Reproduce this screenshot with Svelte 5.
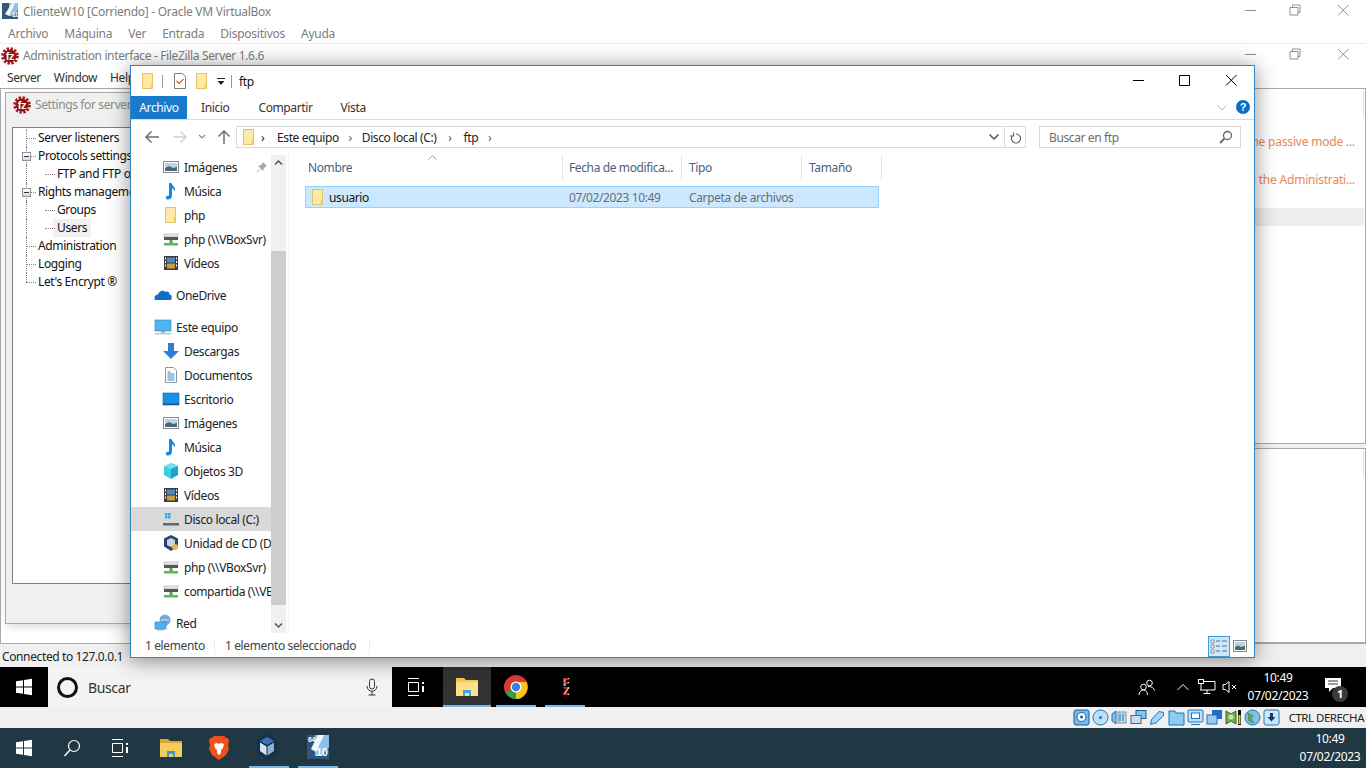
<script>
  // nav pane rows of the explorer window
  const navItems = [
    { label: 'Imágenes', icon: 'images', sub: true, pin: true },
    { label: 'Música', icon: 'music', sub: true },
    { label: 'php', icon: 'folder', sub: true },
    { label: 'php (\\\\VBoxSvr)', icon: 'netdrive', sub: true },
    { label: 'Vídeos', icon: 'video', sub: true },
    { label: 'OneDrive', icon: 'onedrive', gap: true },
    { label: 'Este equipo', icon: 'pc', gap: true },
    { label: 'Descargas', icon: 'download', sub: true },
    { label: 'Documentos', icon: 'doc', sub: true },
    { label: 'Escritorio', icon: 'desktop', sub: true },
    { label: 'Imágenes', icon: 'images', sub: true },
    { label: 'Música', icon: 'music', sub: true },
    { label: 'Objetos 3D', icon: 'cube', sub: true },
    { label: 'Vídeos', icon: 'video', sub: true },
    { label: 'Disco local (C:)', icon: 'disk', sub: true, active: true },
    { label: 'Unidad de CD (D:) VirtualBox', icon: 'cd', sub: true },
    { label: 'php (\\\\VBoxSvr)', icon: 'netdrive', sub: true },
    { label: 'compartida (\\\\VBoxSvr)', icon: 'netdrive', sub: true },
    { label: 'Red', icon: 'net', gap: true }
  ];

  const vmMenu = ['Archivo', 'Máquina', 'Ver', 'Entrada', 'Dispositivos', 'Ayuda'];
  const tree = [
    { label: 'Server listeners' },
    { label: 'Protocols settings', open: true },
    { label: 'FTP and FTP over TLS', child: true },
    { label: 'Rights management', open: true },
    { label: 'Groups', child: true },
    { label: 'Users', child: true, current: true },
    { label: 'Administration' },
    { label: 'Logging' },
    { label: "Let's Encrypt ®", last: true }
  ];
  const columns = [
    { label: 'Nombre', cls: 'c-name' },
    { label: 'Fecha de modifica...', cls: 'c-date' },
    { label: 'Tipo', cls: 'c-type' },
    { label: 'Tamaño', cls: 'c-size' }
  ];
</script>

{#snippet winButtons(cls, restore)}
  <div class="win-buttons {cls}">
    <svg width="46" height="20" viewBox="0 0 46 20"><path d="M17 10.500h11" stroke="currentColor" fill="none"/></svg>
    <svg width="46" height="20" viewBox="0 0 46 20">
      {#if restore}
        <path d="M18.500 7.500v-2.500h7.500v7.500h-2M16 7.500h8v7.500h-8z" stroke="currentColor" fill="none"/>
      {:else}
        <path d="M17.500 5.500h10v10h-10z" stroke="currentColor" fill="none"/>
      {/if}
    </svg>
    <svg width="46" height="20" viewBox="0 0 46 20"><path d="M18 5l10.500 10.500M28.500 5L18 15.500" stroke="currentColor" fill="none"/></svg>
  </div>
{/snippet}

{#snippet fzLogo()}
  <svg width="18" height="18" viewBox="0 0 18 18">
    <circle cx="9" cy="9" r="7" fill="none" stroke="#a81818" stroke-width="3.600" stroke-dasharray="2.200 1.500"/>
    <circle cx="9" cy="9" r="6.500" fill="#8f1414"/>
    <text x="9" y="13" text-anchor="middle" font-size="11" font-weight="700" fill="#fff" font-family="Liberation Sans, sans-serif">fz</text>
  </svg>
{/snippet}

{#snippet folderIcon()}
  <svg width="16" height="18" viewBox="0 0 16 18">
    <path d="M2.500 1.500h10v15h-10z" fill="#ffe9a6" stroke="#e3c26c"/>
    <path d="M10.500 11.500h2v5h-2z" fill="#f2cf6d"/>
  </svg>
{/snippet}

{#snippet navIcon(name)}
  <svg width="18" height="18" viewBox="0 0 18 18">
    {#if name === 'folder'}
      <path d="M3.500 1.500h10v15h-10z" fill="#ffe9a6" stroke="#e3c26c"/><path d="M11.500 11h2v5.500h-2z" fill="#f2cf6d"/>
    {:else if name === 'images'}
      <rect x="1.500" y="3.500" width="15" height="11" fill="#fff" stroke="#7f8c96"/><rect x="3" y="5" width="12" height="8" fill="#b9d3e6"/><path d="M3 10l4-2 4 2 4-1v4H3z" fill="#4d6a70"/>
    {:else if name === 'music'}
      <path d="M7 1h2.500c.5 3 4.500 4 3.500 8.500-1-2-2-3-3-3V14c0 2-2 3.500-4 3.500-2.500 0-3-2.500-1-3.500 1-.5 1.500-.5 2-.5z" fill="#1d86d8"/>
    {:else if name === 'netdrive'}
      <rect x="2" y="4" width="14" height="3" fill="#e4e6e6" stroke="#9aa0a0" stroke-width=".5"/><rect x="2" y="7" width="14" height="3" fill="#505858"/><rect x="7.500" y="10" width="3" height="3" fill="#4ca84c"/><rect x="2" y="13" width="14" height="2.500" fill="#58b858"/>
    {:else if name === 'video'}
      <rect x="2" y="2" width="14" height="14" fill="#3c3c3c"/><rect x="5" y="3.500" width="8" height="5" fill="#4c88c8"/><rect x="5" y="9.500" width="8" height="5" fill="#c8a040"/><path d="M3 3.500h1v2H3zM3 7h1v2H3zM3 10.500h1v2H3zM14 3.500h1v2h-1zM14 7h1v2h-1zM14 10.500h1v2h-1z" fill="#fff"/>
    {:else if name === 'onedrive'}
      <path d="M1 14c-1.500-3 .5-5.500 3-5.500C5 5 9 3.500 11.500 6c2-1 4 0 4 2.500 2 0 3 3 1.500 5.500z" fill="#0f6fc6"/>
    {:else if name === 'pc'}
      <rect x="1" y="2" width="16" height="11" fill="#4db4ee" stroke="#2d7fb8" stroke-width=".6"/><path d="M7 13h4v2H7z" fill="#9fb4c0"/><rect x="1" y="15" width="16" height="1.500" fill="#b8c8d2"/>
    {:else if name === 'download'}
      <path d="M6 1h6v8h5l-8 8-8-8h5z" fill="#2f7fd6"/>
    {:else if name === 'doc'}
      <path d="M3.500 1.500h8l3 3v12h-11z" fill="#fff" stroke="#8a949a"/><path d="M5.500 6h3M5.500 8h7M5.500 10h7M5.500 12h7M5.500 14h7" stroke="#3f87c8"/>
    {:else if name === 'desktop'}
      <rect x="1" y="3" width="16" height="12" fill="#1c8fe6" stroke="#0f69b0" stroke-width=".6"/><rect x="1" y="13.500" width="16" height="1.500" fill="#13599a"/>
    {:else if name === 'cube'}
      <path d="M9 1l7 3v9l-7 4z" fill="#1ba4c8"/><path d="M9 1L2 4l7 3 7-3z" fill="#6fe0ef"/><path d="M2 4l7 3v10l-7-4z" fill="#3ccbe0"/>
    {:else if name === 'disk'}
      <path d="M3 3h2.500v2.500H3zM6 3h2.500v2.500H6zM3 6h2.500v2.500H3zM6 6h2.500v2.500H6z" fill="#31a8e4"/><path d="M2 11h14l1 3v1.500H1V14z" fill="#d7dadb"/><rect x="1" y="13" width="16" height="2.500" fill="#62696b"/>
    {:else if name === 'cd'}
      <path d="M9 1l7 3.500v8L9 17l-7-4.500v-8z" fill="#27486e"/><path d="M9 4l4 2v5l-4 2-4-2V6z" fill="#c8d4df"/><circle cx="13" cy="13" r="3" fill="#e8b93e"/>
    {:else if name === 'net'}
      <circle cx="11" cy="6" r="5.500" fill="#74a9dc"/><path d="M7 7c2-2 5-1 8-1" stroke="#d4e8f7" fill="none"/><rect x="1" y="8" width="11" height="7" fill="#4db4ee" stroke="#2d7fb8" stroke-width=".6"/><rect x="3" y="15" width="7" height="1.500" fill="#9fb4c0"/>
    {/if}
  </svg>
{/snippet}

<div class="screen">
  <div class="vm-title">
    <svg class="vm-logo" width="20" height="18" viewBox="0 0 20 18">
      <rect x="2" y="1" width="16" height="16" fill="#37567c"/>
      <path d="M9 1h9v7l-5 6H9z" fill="#8fc0e8"/><path d="M12 1l-7 11 4 2 6-13z" fill="#f4f8fb"/>
      <text x="12" y="15" font-size="7" font-weight="700" fill="#fff" font-family="Liberation Sans, sans-serif">10</text>
    </svg>
    <span>ClienteW10 [Corriendo] - Oracle VM VirtualBox</span>
    {@render winButtons('faded', true)}
  </div>
  <div class="vm-menu">
    {#each vmMenu as item}<span>{item}</span>{/each}
  </div>

  <div class="fz">
    <div class="fz-title">
      {@render fzLogo()}
      <span>Administration interface - FileZilla Server 1.6.6</span>
      {@render winButtons('faded lifted', true)}
    </div>
    <div class="fz-menu"><span>Server</span><span>Window</span><span>Help</span></div>

    <div class="fz-body">
      <div class="fz-left">
        <div class="dialog">
          <div class="dialog-title">{@render fzLogo()}<span>Settings for server</span></div>
          <div class="tree">
            {#each tree as node}
              <div class="node" class:child={node.child} class:last={node.last}>
                {#if node.open}<i class="expander"></i>{/if}
                <span class:current={node.current}>{node.label}</span>
              </div>
            {/each}
          </div>
        </div>
      </div>
      <div class="fz-right">
        <div class="pane top-pane">
          <i class="thin-scroll"></i>
          <div class="log">You should configure the passive mode ...</div>
          <div class="log">Connections from outside on the Administrati...</div>
          <div class="log selected-log"></div>
        </div>
        <div class="pane bottom-pane"><i class="thin-scroll"></i></div>
      </div>
    </div>
    <div class="fz-status">Connected to 127.0.0.1</div>
  </div>

  <div class="guest-bar">
    <div class="start">
      <svg width="18" height="18" viewBox="0 0 18 18"><path d="M1 3.200l7-1v6.300H1zM9 2l8-1.200v7.700H9zM1 9.500h7v6.300l-7-1zM9 9.500h8v7.700L9 16z" fill="#fff"/></svg>
    </div>
    <div class="cortana">
      <i class="ring"></i>
      <span>Buscar</span>
      <svg class="mic" width="12" height="18" viewBox="0 0 12 18"><rect x="3.500" y="1" width="5" height="10" rx="2.500" fill="none" stroke="#333"/><path d="M1 8c0 7 10 7 10 0M6 13.500V17M2.500 17h7" fill="none" stroke="#333"/></svg>
    </div>
    <div class="task-view">
      <svg width="18" height="18" viewBox="0 0 18 18"><path d="M1 .5h11M1 17.500h11M1.500 4.500h10v9h-10z" fill="none" stroke="#fff"/><path d="M15 4h2v2h-2zM15 8h2v6h-2z" fill="#fff"/></svg>
    </div>
    <div class="guest-app active">
      <svg width="22" height="20" viewBox="0 0 22 20"><path d="M0 1h8l2 2h12v16H0z" fill="#f3c94f"/><path d="M0 5h22v14H0z" fill="#ffe08a"/><path d="M7 19v-6h8v6h-2v-3H9v3z" fill="#3ea6dc"/></svg>
    </div>
    <div class="guest-app chrome">
      <svg width="24" height="24" viewBox="0 0 24 24">
        <circle cx="12" cy="12" r="12" fill="#d93b30"/>
        <path d="M12 12L1.500 17.500A12 12 0 0 0 12 24c3 0 5-1 6-2z" fill="#2f9e47"/>
        <path d="M12 7h10.500A12 12 0 0 1 12 24z" fill="#f6c525"/>
        <circle cx="12" cy="12" r="5.500" fill="#fff"/><circle cx="12" cy="12" r="4.200" fill="#3d7fe0"/>
      </svg>
    </div>
    <div class="guest-app fzapp"><span>F<br/>Z</span></div>
    <div class="tray">
      <svg class="people" width="18" height="18" viewBox="0 0 18 18"><circle cx="11.500" cy="5" r="2.800" fill="none" stroke="#fff"/><circle cx="5.500" cy="9" r="2.800" fill="none" stroke="#fff"/><path d="M1 17c0-3 2-5 4.500-5s4 2 4 5M10 8.500c3 0 6 1 6.500 4" fill="none" stroke="#fff"/></svg>
      <svg class="chev" width="14" height="8" viewBox="0 0 14 8"><path d="M1.500 7L7 1.500 12.500 7" fill="none" stroke="#fff"/></svg>
      <svg class="netw" width="18" height="16" viewBox="0 0 18 16"><path d="M5 2.500h12v8.500H2M9 11v3.500M5.500 14.500h7" fill="none" stroke="#fff"/><rect x=".5" y=".5" width="5" height="4" fill="#000" stroke="#fff"/><path d="M3 4.500V11" stroke="#fff"/></svg>
      <svg class="vol" width="16" height="14" viewBox="0 0 16 14"><path d="M1 4.500h2.500L7 1.500v11L3.500 9.500H1z" fill="none" stroke="#fff"/><path d="M10 5l4 4M14 5l-4 4" stroke="#fff"/></svg>
      <div class="clock"><span>10:49</span><span>07/02/2023</span></div>
      <div class="notif">
        <svg width="18" height="16" viewBox="0 0 18 16"><path d="M1 1h16v10H9l-4 4v-4H1z" fill="#fff"/><path d="M4 4h10M4 7h10" stroke="#000" stroke-width=".8"/></svg>
        <b>1</b>
      </div>
    </div>
  </div>

  <div class="vbox-status">
    <svg width="17" height="17" viewBox="0 0 17 17"><rect x="1" y="1" width="15" height="15" rx="2" fill="#7ab9e8" stroke="#125f9f"/><circle cx="8.500" cy="8" r="4.500" fill="#fff" stroke="#125f9f"/><circle cx="8.500" cy="8" r="1.500" fill="#125f9f"/></svg>
    <svg width="17" height="17" viewBox="0 0 17 17"><circle cx="8.500" cy="8.500" r="7.500" fill="#bde0f7" stroke="#1c78bd"/><circle cx="8.500" cy="8.500" r="1.500" fill="#1c78bd"/></svg>
    <svg width="17" height="17" viewBox="0 0 17 17"><path d="M1 5l4-3v13l-4-3z" fill="#7ec0ea" stroke="#1c78bd"/><rect x="7" y="3" width="8" height="11" fill="#bcd9ee" stroke="#7d98aa"/><path d="M9 5v7M12 5v7" stroke="#1c78bd"/></svg>
    <svg width="17" height="17" viewBox="0 0 17 17"><rect x="6" y="1.500" width="10" height="8" fill="#8ac2ec" stroke="#1f6496"/><rect x="1" y="6.500" width="10" height="8" fill="#c8dfef" stroke="#47677d"/></svg>
    <svg width="17" height="17" viewBox="0 0 17 17"><path d="M1.500 15.500l1-5L10 2.500l4.500 1v3L7 14z" fill="#a9d4f3" stroke="#1c78bd"/></svg>
    <svg width="17" height="17" viewBox="0 0 17 17"><path d="M1 2h6l1 2h8v12H1z" fill="#8accf2" stroke="#1c78bd"/></svg>
    <svg width="17" height="17" viewBox="0 0 17 17"><rect x="1" y="1" width="15" height="12" rx="1" fill="#bde0f7" stroke="#1c78bd"/><rect x="4.500" y="4" width="8" height="5.500" fill="#fff" stroke="#1c78bd"/><path d="M4 15.500h9" stroke="#1c78bd"/></svg>
    <svg width="17" height="17" viewBox="0 0 17 17"><rect x="6" y="1" width="10" height="9" fill="#1f6fc0"/><rect x="1" y="6" width="10" height="9" fill="#9cc8ec" stroke="#1f6fc0"/></svg>
    <svg width="17" height="17" viewBox="0 0 17 17"><path d="M1 2l5 3 5-3v13l-5-3-5 3z" fill="#74b04c" stroke="#2f6b2a"/><circle cx="6" cy="8" r="2.500" fill="#c6e6a0"/><rect x="13" y="1" width="3" height="15" fill="#111"/><rect x="13.500" y="6" width="2" height="9" fill="#b6d83e"/></svg>
    <svg width="17" height="17" viewBox="0 0 17 17"><circle cx="8.500" cy="8.500" r="7.500" fill="#7ec0ea" stroke="#1c78bd"/><path d="M4 4l5 3-2 3 3 4-5-2z" fill="#5eb048" stroke="#2f6b2a" stroke-width=".5"/></svg>
    <svg width="17" height="17" viewBox="0 0 17 17"><rect x="1" y="1" width="15" height="15" rx="2" fill="#cfe6f7" stroke="#1c78bd"/><path d="M7 4h3v4h2.500l-4 4.500-4-4.500H7z" fill="#123a66"/></svg>
    <span>CTRL DERECHA</span>
  </div>

  <div class="host-bar">
    <div class="host-app">
      <svg width="18" height="18" viewBox="0 0 18 18"><path d="M1 3.200l7-1v6.300H1zM9 2l8-1.200v7.700H9zM1 9.500h7v6.300l-7-1zM9 9.500h8v7.700L9 16z" fill="#fff"/></svg>
    </div>
    <div class="host-app">
      <svg width="18" height="18" viewBox="0 0 18 18"><circle cx="11" cy="7" r="5.500" fill="none" stroke="#fff" stroke-width="1.200"/><path d="M7 11l-5.500 6" stroke="#fff" stroke-width="1.400"/></svg>
    </div>
    <div class="host-app">
      <svg width="18" height="18" viewBox="0 0 18 18"><path d="M1 .5h11M1 17.500h11M1.500 4.500h10v9h-10z" fill="none" stroke="#fff"/><path d="M15 4h2v2h-2zM15 8h2v6h-2z" fill="#fff"/></svg>
    </div>
    <div class="host-app after-task">
      <svg width="22" height="20" viewBox="0 0 22 20"><path d="M0 1h8l2 2h12v16H0z" fill="#d9a92e"/><path d="M0 5h22v14H0z" fill="#f5cc5c"/><path d="M7 19v-6h8v6h-2v-3H9v3z" fill="#3a9ad6"/></svg>
    </div>
    <div class="host-app">
      <svg width="20" height="24" viewBox="0 0 20 24"><path d="M5 0h10l2 2h2l1 3-1 4 1 4-3 6-7 5-7-5-3-6 1-4-1-4 1-3h2z" fill="#f1501c"/><path d="M5 8l3-1 2 1 2-1 3 1-1 4-2 2v3l-2 2-2-2v-3l-2-2z" fill="#fff"/></svg>
    </div>
    <div class="host-app open cube-app">
      <svg width="20" height="26" viewBox="0 0 20 26"><path d="M10 0l10 5.500v13L10 26 0 18.500v-13z" fill="#14304e"/><path d="M10 3l7 4-7 4-7-4z" fill="#3b74ad"/><path d="M3 8.500l6.500 4v9L3 17z" fill="#d5e2ee"/><path d="M17 8.500l-6.500 4v9L17 17z" fill="#8fb2d0"/></svg>
    </div>
    <div class="host-app open">
      <svg width="24" height="26" viewBox="0 0 24 26"><rect x="1" y="1" width="22" height="24" fill="#32557f"/><path d="M9 1h14v12l-7 9H9z" fill="#8ec1ea"/><path d="M12 1L5 15l5 3 8-17z" fill="#f4f8fb"/><text x="2" y="8" font-size="7" font-weight="700" fill="#fff" font-family="Liberation Sans, sans-serif">64</text><text x="10" y="22" font-size="11" font-weight="700" fill="#fff" font-family="Liberation Sans, sans-serif">10</text></svg>
    </div>
    <div class="host-clock"><span>10:49</span><span>07/02/2023</span></div>
  </div>

  <!-- explorer window floats over the filezilla window -->
  <div class="explorer">
    <div class="ex-title">
      {@render folderIcon()}
      <i class="qat-sep"></i>
      <svg class="qat-check" width="16" height="18" viewBox="0 0 16 18"><path d="M2.500 1.500h8l3 3v12h-11z" fill="#fff" stroke="#7f7f7f"/><path d="M4.500 9l2.500 2.500L11.500 7" fill="none" stroke="#d9572b" stroke-width="1.200"/></svg>
      {@render folderIcon()}
      <svg class="qat-drop" width="10" height="10" viewBox="0 0 10 10"><path d="M1 2.500h8" stroke="#222"/><path d="M1.500 5h7L5 9z" fill="#222"/></svg>
      <i class="qat-sep"></i>
      <span class="ex-name">ftp</span>
      {@render winButtons('solid', false)}
    </div>
    <div class="ribbon">
      <span class="tab-file">Archivo</span>
      <span class="tab t1">Inicio</span>
      <span class="tab t2">Compartir</span>
      <span class="tab t3">Vista</span>
      <svg class="ribbon-chev" width="12" height="8" viewBox="0 0 12 8"><path d="M1.500 1.500L6 6l4.500-4.500" fill="none" stroke="#b2b2b2"/></svg>
      <i class="help">?</i>
    </div>
    <div class="address-row">
      <svg class="nav-btn" width="16" height="14" viewBox="0 0 16 14"><path d="M15 7H2M7.500 1.500L2 7l5.500 5.500" fill="none" stroke="#6f6f6f" stroke-width="1.500"/></svg>
      <svg class="nav-btn fwd" width="16" height="14" viewBox="0 0 16 14"><path d="M1 7h13M8.500 1.500L14 7l-5.500 5.500" fill="none" stroke="#d2d2d2" stroke-width="1.500"/></svg>
      <svg class="nav-btn drop" width="8" height="6" viewBox="0 0 8 6"><path d="M1 1l3 3 3-3" fill="none" stroke="#8a8a8a" stroke-width="1.200"/></svg>
      <svg class="nav-btn up" width="14" height="16" viewBox="0 0 14 16"><path d="M7 15V2M1.500 7.500L7 2l5.500 5.500" fill="none" stroke="#6f6f6f" stroke-width="1.500"/></svg>
      <div class="address">
        {@render folderIcon()}
        <span class="crumb-sep first">›</span><span>Este equipo</span>
        <span class="crumb-sep">›</span><span>Disco local (C:)</span>
        <span class="crumb-sep wide">›</span><span>ftp</span>
        <span class="crumb-sep">›</span>
        <svg class="addr-drop" width="12" height="8" viewBox="0 0 12 8"><path d="M1.500 1.500L6 6l4.500-4.500" fill="none" stroke="#555" stroke-width="1.500"/></svg>
        <div class="refresh">
          <svg width="12" height="13" viewBox="0 0 12 13"><path d="M6 2.500a4.500 4.500 0 1 1-4 2.500M3.500 1v3.500H0" fill="none" stroke="#666" stroke-width="1.200" transform="translate(1 .5)"/></svg>
        </div>
      </div>
      <div class="search">
        <span>Buscar en ftp</span>
        <svg width="14" height="14" viewBox="0 0 14 14"><circle cx="8.500" cy="5.500" r="4" fill="none" stroke="#666" stroke-width="1.300"/><path d="M5.500 8.500L1 13" stroke="#666" stroke-width="1.800"/></svg>
      </div>
    </div>
    <div class="ex-body">
      <div class="nav">
        <div class="nav-list">
          {#each navItems as item}
            <div class="nav-row" class:sub={item.sub} class:gap={item.gap} class:active={item.active}>
              {@render navIcon(item.icon)}
              <span>{item.label}</span>
              {#if item.pin}
                <svg class="pin" width="12" height="12" viewBox="0 0 12 12"><path d="M7 1l4 4-1.500.5L7.500 8 7 10 2 5l2-.5L6.500 2.500z" fill="#a9a9a9"/><path d="M3.500 8.500L1 11" stroke="#a9a9a9"/></svg>
              {/if}
            </div>
          {/each}
        </div>
        <div class="scrollbar">
          <svg width="15" height="16" viewBox="0 0 15 16"><path d="M4 9.500L7.500 6 11 9.500" fill="none" stroke="#505050" stroke-width="1.500"/></svg>
          <i class="thumb"></i>
          <svg width="15" height="16" viewBox="0 0 15 16"><path d="M4 6.500L7.500 10 11 6.500" fill="none" stroke="#505050" stroke-width="1.500"/></svg>
        </div>
      </div>
      <div class="files">
        <div class="file-head">
          <svg class="sort" width="9" height="5" viewBox="0 0 9 5"><path d="M.5 4.500l4-4 4 4" fill="none" stroke="#9a9a9a"/></svg>
          {#each columns as col}<div class="col {col.cls}">{col.label}</div>{/each}
        </div>
        <div class="file-row">
          <div class="first">{@render folderIcon()}<span>usuario</span></div>
          <div class="c-date muted">07/02/2023 10:49</div>
          <div class="c-type muted">Carpeta de archivos</div>
        </div>
      </div>
    </div>
    <div class="ex-status">
      <span class="st1">1 elemento</span>
      <span class="st2">1 elemento seleccionado</span>
      <div class="views">
        <div class="view on">
          <svg width="18" height="16" viewBox="0 0 18 16"><path d="M1 2h3v3H1zM1 7h3v3H1zM1 12h3v3H1z" fill="#fff" stroke="#6b6b6b" stroke-width=".7"/><path d="M6 3h4M12 3h5M6 8h4M12 8h5M6 13h4M12 13h5" stroke="#6b6b6b"/></svg>
        </div>
        <div class="view">
          <svg width="14" height="12" viewBox="0 0 14 12"><rect x=".5" y=".5" width="13" height="11" fill="#fff" stroke="#8a8a8a"/><rect x="2" y="2" width="10" height="8" fill="#b9d3e6"/><path d="M2 7l3-1.500L8 7l4-1v4H2z" fill="#4d6a70"/></svg>
        </div>
      </div>
    </div>
  </div>
</div>

<style>
  :global(body) {
    margin: 0;
    background: #fff;
  }

  .screen {
    position: relative;
    width: 1366px;
    height: 768px;
    overflow: hidden;
    display: flex;
    flex-direction: column;
    font-family: "Noto Sans", "Liberation Sans", sans-serif;
    font-size: 12px;
    letter-spacing: -0.38px;
    color: #1a1a1a;
    background: #fff;
  }

  i {
    display: block;
    font-style: normal;
  }

  /* virtualbox frame */
  .vm-title {
    height: 22px;
    display: flex;
    align-items: center;
    color: #7d7d7d;
    flex: none;
    letter-spacing: -0.28px;
  }

  .vm-logo {
    margin: 0 3px 0 0;
    flex: none;
  }

  .win-buttons {
    margin-left: auto;
    display: flex;
    flex: none;
  }

  .win-buttons.faded {
    color: #8f8f8f;
    margin-bottom: 2px;
  }

  .win-buttons.lifted {
    margin-bottom: 4px;
  }

  .win-buttons.solid {
    color: #000;
    margin-bottom: 2px;
  }

  .vm-menu {
    height: 21px;
    flex: none;
    box-sizing: content-box;
    display: flex;
    align-items: center;
    gap: 16px;
    padding-left: 8px;
    color: #7d7d7d;
    border-bottom: 1px solid #ececec;
    letter-spacing: -0.25px;
  }

  .vm-menu span {
    position: relative;
    top: 1px;
  }

  /* filezilla window behind */
  .fz {
    height: 623px;
    flex: none;
    display: flex;
    flex-direction: column;
  }

  .fz-title {
    height: 23px;
    flex: none;
    display: flex;
    align-items: center;
    gap: 4px;
    padding-left: 1px;
    color: #7d7d7d;
    letter-spacing: -0.35px;
  }

  .fz-menu {
    height: 21px;
    flex: none;
    display: flex;
    align-items: center;
    gap: 13px;
    padding-left: 7px;
    color: #333;
  }

  .fz-body {
    height: 556px;
    flex: none;
    display: flex;
    background: #fff;
    border-top: 1px solid #a9a9a9;
    border-bottom: 1px solid #a9a9a9;
    box-sizing: border-box;
    border-left: 1px solid #a9a9a9;
  }

  .fz-left {
    width: 640px;
    flex: none;
    padding: 3px 0 0 4px;
    box-sizing: border-box;
  }

  .dialog {
    height: 532px;
    box-sizing: border-box;
    background: #f0f0f0;
    border: 1px solid #a9a9a9;
    padding: 0 0 0 6px;
    box-shadow: 2px 3px 8px rgba(0, 0, 0, 0.15);
  }

  .dialog-title {
    height: 34px;
    box-sizing: border-box;
    padding-top: 3px;
    display: flex;
    align-items: flex-start;
    gap: 4px;
    color: #8c8c8c;
    margin-left: 1px;
    line-height: 18px;
  }

  .tree {
    height: 457px;
    box-sizing: border-box;
    background: #fff;
    border: 1px solid #7f7f7f;
    padding-top: 1px;
  }

  .node {
    position: relative;
    height: 18px;
    line-height: 18px;
    padding-left: 25px;
    white-space: nowrap;
    color: #111;
  }

  .node::before {
    content: "";
    position: absolute;
    left: 13px;
    top: 0;
    bottom: 0;
    border-left: 1px dotted #808080;
  }

  .node.last::before {
    bottom: 9px;
  }

  .node::after {
    content: "";
    position: absolute;
    left: 13px;
    width: 10px;
    top: 9px;
    border-top: 1px dotted #808080;
  }

  .node.child {
    padding-left: 44px;
  }

  .node.child::after {
    left: 32px;
    width: 10px;
  }

  .expander {
    position: absolute;
    left: 9px;
    top: 5px;
    width: 7px;
    height: 7px;
    background: linear-gradient(#fff, #d5d9e0);
    border: 1px solid #8a94a0;
    z-index: 1;
  }

  .expander::after {
    content: "";
    position: absolute;
    left: 1px;
    right: 1px;
    top: 3px;
    border-top: 1px solid #333;
  }

  .current {
    background: #f0f0f0;
    display: inline-block;
    padding: 0 4px;
    margin-left: -4px;
  }

  .fz-right {
    flex: 1;
    display: flex;
    flex-direction: column;
    gap: 4px;
    background: #f0f0f0;
  }

  .pane {
    position: relative;
    background: #fff;
    border-right: 1px solid #a9a9a9;
    border-bottom: 1px solid #a9a9a9;
    box-sizing: border-box;
  }

  .top-pane {
    height: 355px;
    padding-top: 44px;
    display: flex;
    flex-direction: column;
    gap: 20px;
  }

  .bottom-pane {
    flex: 1;
    border-top: 1px solid #a9a9a9;
  }

  .thin-scroll {
    position: absolute;
    right: 1px;
    top: 2px;
    width: 1px;
    height: 24px;
    background: #dcdcdc;
  }

  .log {
    height: 18px;
    line-height: 18px;
    text-align: right;
    padding-right: 10px;
    color: #ea8650;
    white-space: nowrap;
    letter-spacing: -0.2px;
  }

  .selected-log {
    background: #eeeeee;
    margin-right: 1px;
    padding: 0;
    margin-top: -1px;
  }

  .fz-status {
    flex: 1;
    display: flex;
    align-items: center;
    padding: 2px 0 0 2px;
    background: #f0f0f0;
    color: #222;
  }

  /* guest taskbar */
  .guest-bar {
    height: 40px;
    flex: none;
    display: flex;
    align-items: stretch;
    background: #000;
    color: #fff;
  }

  .start {
    width: 48px;
    display: flex;
    align-items: center;
    justify-content: center;
    flex: none;
  }

  .cortana {
    width: 344px;
    flex: none;
    display: flex;
    align-items: center;
    background: #f3f3f3;
    color: #333;
    font-size: 14px;
  }

  .ring {
    width: 15px;
    height: 15px;
    border: 3px solid #111;
    border-radius: 50%;
    margin: 0 10px 0 9px;
  }

  .mic {
    margin-left: auto;
    margin-right: 14px;
  }

  .task-view {
    width: 48px;
    flex: none;
    display: flex;
    align-items: center;
    justify-content: center;
  }

  .guest-app {
    width: 40px;
    margin-right: 8px;
    flex: none;
    display: flex;
    align-items: center;
    justify-content: center;
    box-sizing: border-box;
    border-bottom: 2px solid #76b9ed;
    padding-top: 2px;
  }

  .guest-app.active {
    width: 48px;
    margin-right: 5px;
    margin-left: 3px;
    background: #333;
  }

  .guest-app.chrome {
    margin-right: 9px;
  }

  .fzapp span {
    color: #d02020;
    font: 700 10px/9px "Liberation Sans", sans-serif;
    text-align: center;
    text-shadow: 1px 0 #fff;
  }

  .tray {
    margin-left: auto;
    display: flex;
    align-items: center;
    position: relative;
  }

  .people {
    margin-right: 20px;
  }

  .chev {
    margin-right: 8px;
  }

  .netw {
    margin-right: 6px;
  }

  .vol {
    margin-right: 4px;
  }

  .clock {
    width: 72px;
    display: flex;
    flex-direction: column;
    align-items: center;
    line-height: 18px;
    font-size: 12px;
    letter-spacing: -0.3px;
  }

  .notif {
    position: relative;
    width: 52px;
    height: 40px;
    display: flex;
    align-items: center;
    box-sizing: border-box;
    padding-left: 10px;
    padding-bottom: 4px;
  }

  .notif b {
    position: absolute;
    left: 18px;
    top: 19px;
    width: 16px;
    height: 16px;
    line-height: 16px;
    border-radius: 50%;
    background: #3a3a3a;
    text-align: center;
    font-weight: 700;
    font-size: 11px;
    color: #fff;
  }

  /* virtualbox status icons */
  .vbox-status {
    height: 21px;
    flex: none;
    display: flex;
    align-items: center;
    justify-content: flex-end;
    gap: 2px;
    padding-right: 2px;
    background: #f0f0f0;
    color: #222;
    font-size: 11.5px;
  }

  .vbox-status span {
    margin-left: 7px;
    letter-spacing: -0.5px;
  }

  /* host taskbar */
  .host-bar {
    height: 40px;
    flex: none;
    display: flex;
    align-items: center;
    background: #1f3843;
    color: #fff;
  }

  .host-app {
    width: 48px;
    height: 40px;
    flex: none;
    display: flex;
    align-items: center;
    justify-content: center;
    box-sizing: border-box;
  }

  .host-app.after-task {
    margin-left: 3px;
  }

  .host-app.open {
    width: 40px;
    margin-left: 6px;
    margin-right: 3px;
    border-bottom: 2px solid #76b9ed;
  }

  .cube-app {
    padding-right: 4px;
  }

  .host-clock {
    margin-left: auto;
    width: 72px;
    display: flex;
    flex-direction: column;
    align-items: center;
    line-height: 18px;
    letter-spacing: -0.3px;
  }

  /* explorer */
  .explorer {
    position: absolute;
    left: 130px;
    top: 65px;
    width: 1125px;
    height: 593px;
    box-sizing: border-box;
    display: flex;
    flex-direction: column;
    background: #fff;
    border: 1px solid #2f86c4;
    box-shadow: 0 2px 20px rgba(0, 0, 0, 0.45);
  }

  .ex-title {
    height: 30px;
    flex: none;
    display: flex;
    align-items: center;
    padding-left: 9px;
    color: #111;
  }

  .qat-sep {
    width: 1px;
    height: 13px;
    background: #9a9a9a;
    margin: 0 9px 0 6px;
  }

  .qat-check {
    margin-right: 6px;
  }

  .qat-drop {
    margin-left: 6px;
    margin-right: -1px;
  }

  .ex-name {
    margin-left: -2px;
  }

  .ribbon {
    position: relative;
    height: 24px;
    flex: none;
    display: flex;
    align-items: stretch;
    border-bottom: 1px solid #dadbdc;
    box-sizing: border-box;
  }

  .tab-file {
    width: 56px;
    background: #1979ca;
    color: #fff;
    display: flex;
    align-items: center;
    justify-content: center;
  }

  .tab {
    display: flex;
    align-items: center;
    color: #333;
  }

  .t1 {
    margin-left: 14px;
  }

  .t2 {
    margin-left: 29px;
  }

  .t3 {
    margin-left: 28px;
  }

  .ribbon-chev {
    margin: 8px 0 0 auto;
  }

  .help {
    width: 14px;
    height: 14px;
    border-radius: 50%;
    background: #0a6ec9;
    color: #fff;
    font: 700 11px/14px "Liberation Sans", sans-serif;
    text-align: center;
    margin: 4px 4px 0 8px;
  }

  .address-row {
    height: 34px;
    flex: none;
    display: flex;
    align-items: center;
    position: relative;
    padding-left: 13px;
  }

  .nav-btn {
    flex: none;
  }

  .fwd {
    margin-left: 12px;
  }

  .drop {
    margin-left: 10px;
  }

  .up {
    margin-left: 11px;
  }

  .address {
    width: 790px;
    height: 22px;
    box-sizing: border-box;
    margin-left: 5px;
    border: 1px solid #d9d9d9;
    display: flex;
    align-items: center;
    padding-left: 4px;
    color: #222;
    flex: none;
  }

  .crumb-sep {
    width: 23px;
    text-align: center;
    color: #555;
  }

  .crumb-sep.first {
    width: 20px;
  }

  .crumb-sep.wide {
    width: 27px;
  }

  .addr-drop {
    margin-left: auto;
    margin-right: 4px;
  }

  .refresh {
    width: 20px;
    height: 20px;
    border-left: 1px solid #d9d9d9;
    display: flex;
    align-items: center;
    justify-content: center;
  }

  .search {
    width: 202px;
    height: 22px;
    box-sizing: border-box;
    margin-left: 13px;
    border: 1px solid #d9d9d9;
    display: flex;
    align-items: center;
    justify-content: space-between;
    padding: 0 7px 0 9px;
    color: #6d6d6d;
    flex: none;
  }

  .ex-body {
    flex: 1;
    display: flex;
    min-height: 0;
  }

  .nav {
    width: 155px;
    flex: none;
    display: flex;
    padding-top: 1px;
  }

  .nav-list {
    width: 140px;
    flex: none;
    overflow: hidden;
  }

  .nav-row {
    position: relative;
    height: 24px;
    display: flex;
    align-items: center;
    gap: 4px;
    padding-left: 23px;
    white-space: nowrap;
    color: #222;
  }

  .nav-row.sub {
    padding-left: 31px;
  }

  .nav-row.gap {
    margin-top: 8px;
  }

  .nav-row.active {
    background: #d9d9d9;
  }

  .nav-row svg {
    flex: none;
  }

  .pin {
    position: absolute;
    right: 3px;
    top: 6px;
  }

  .scrollbar {
    width: 15px;
    flex: none;
    display: flex;
    flex-direction: column;
    height: 478px;
    background: #f0f0f0;
  }

  .thumb {
    height: 354px;
    background: #cdcdcd;
    margin-top: 80px;
    margin-bottom: 12px;
  }

  .files {
    flex: 1;
    position: relative;
    padding-left: 17px;
    border-left: 1px solid #f2f2f2;
    margin-left: 2px;
  }

  .file-head {
    position: relative;
    height: 25px;
    display: flex;
    color: #4c607a;
    margin-bottom: 6px;
    margin-top: 1px;
    margin-left: -1px;
    width: 578px;
  }

  .sort {
    position: absolute;
    left: 123px;
    top: 0;
  }

  .col {
    display: flex;
    align-items: center;
    box-sizing: border-box;
    padding-left: 3px;
    border-right: 1px solid #e5e5e5;
    height: 25px;
    white-space: nowrap;
  }

  .c-name {
    width: 258px;
    flex: none;
  }

  .c-date {
    width: 120px;
    padding-left: 6px;
    flex: none;
  }

  .col.c-date {
    width: 119px;
    padding-left: 6px;
  }

  .c-type {
    width: 120px;
    padding-left: 6px;
    flex: none;
  }

  .col.c-type {
    padding-left: 7px;
  }

  .c-size {
    width: 80px;
    flex: none;
  }

  .col.c-size {
    padding-left: 7px;
  }

  .file-row {
    width: 574px;
    height: 22px;
    box-sizing: border-box;
    margin-left: -1px;
    display: flex;
    align-items: center;
    background: #cce8ff;
    border: 1px solid #99d1ff;
    white-space: nowrap;
  }

  .first {
    display: flex;
    align-items: center;
    gap: 3px;
    padding-left: 4px;
    box-sizing: border-box;
    width: 257px;
    flex: none;
    color: #111;
  }

  .muted {
    color: #6d6d6d;
    box-sizing: border-box;
  }

  .ex-status {
    height: 24px;
    flex: none;
    display: flex;
    align-items: center;
    position: relative;
    color: #444;
    padding: 2px 0 0 14px;
    box-sizing: border-box;
  }

  .st1 {
    width: 69px;
    flex: none;
    border-right: 1px solid #ededed;
    line-height: 16px;
  }

  .st2 {
    margin-left: 10px;
    width: 144px;
    flex: none;
    border-right: 1px solid #ededed;
    line-height: 16px;
    white-space: nowrap;
  }

  .views {
    margin-left: auto;
    margin-right: 7px;
    display: flex;
    align-items: center;
    gap: 3px;
  }

  .view {
    display: flex;
    align-items: center;
    justify-content: center;
    box-sizing: border-box;
    min-width: 14px;
  }

  .view.on {
    width: 22px;
    height: 21px;
    background: #cce8ff;
    border: 1px solid #3e9bd8;
  }
</style>
